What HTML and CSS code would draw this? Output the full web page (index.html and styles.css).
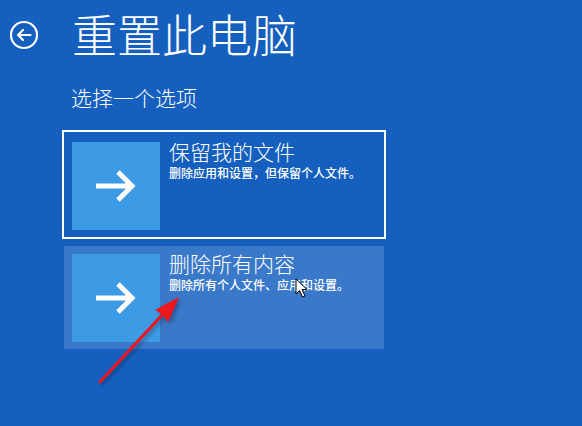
FILE: index.html
```html
<!DOCTYPE html>
<html lang="zh-CN">
  <head>
    <meta charset="UTF-8" />
    <meta name="viewport" content="width=device-width, initial-scale=1.0" />
    <title>重置此电脑</title>
    <link rel="stylesheet" href="styles.css">
  </head>
  <body>
    <div class="page">
      <div class="header">
        <button class="back-button" aria-label="返回">
          <svg width="30" height="30" viewBox="0 0 30 30">
            <circle cx="15" cy="15" r="13" fill="none" stroke="#fff" stroke-width="2.2" />
            <path d="M21.5 15H9 M14 10L9 15L14 20" fill="none" stroke="#fff" stroke-width="2.2" stroke-linecap="round" stroke-linejoin="round" />
          </svg>
        </button>
        <h1>重置此电脑</h1>
      </div>
      <div class="subtitle">选择一个选项</div>
      <div class="options">
        <div class="option selected">
          <div class="option-tile">
            <svg width="44" height="34" viewBox="0 0 44 34">
              <path d="M2 17H38 M24 3L38 17L24 31" fill="none" stroke="#fff" stroke-width="5" />
            </svg>
          </div>
          <div class="option-text">
            <div class="option-title">保留我的文件</div>
            <div class="option-description">删除应用和设置，但保留个人文件。</div>
          </div>
        </div>
        <div class="option hover">
          <div class="option-tile">
            <svg width="44" height="34" viewBox="0 0 44 34">
              <path d="M2 17H38 M24 3L38 17L24 31" fill="none" stroke="#fff" stroke-width="5" />
            </svg>
          </div>
          <div class="option-text">
            <div class="option-title">删除所有内容</div>
            <div class="option-description">删除所有个人文件、应用和设置。</div>
          </div>
        </div>
      </div>
    </div>
    <svg class="annotation" width="582" height="426" viewBox="0 0 582 426">
      <defs>
        <filter id="shadow" x="-20%" y="-20%" width="140%" height="140%">
          <feDropShadow dx="2" dy="2" stdDeviation="2" flood-color="#000" flood-opacity="0.35" />
        </filter>
      </defs>
      <g filter="url(#shadow)">
        <path d="M100 382L164 313" stroke="#f0121c" stroke-width="3" stroke-linecap="round" />
        <path d="M179 297L155 310L162 314L168 322Z" fill="#f0121c" />
      </g>
    </svg>
    <svg class="cursor" width="14" height="21" viewBox="0 0 14 21">
      <path d="M1 1V16L4.5 12.5L7.5 19L10 18L7 11.5H12Z" fill="#fff" stroke="#000" stroke-width="1" stroke-linejoin="round" />
    </svg>
  </body>
</html>
```

FILE: styles.css
```css
body {
  margin: 0;
  background-color: #1560be;
  font-family: "Noto Sans CJK SC", "Noto Sans", sans-serif;
  color: #ffffff;
  width: 582px;
  height: 426px;
  overflow: hidden;
  position: relative;
}
.page {
  padding: 7px 0 0 9px;
}
.header {
  display: flex;
  align-items: center;
}
.back-button {
  background: none;
  border: none;
  padding: 0;
  width: 30px;
  height: 30px;
  margin-top: 2px;
  display: flex;
  cursor: pointer;
}
h1 {
  margin: 0 0 0 33px;
  font-size: 45px;
  font-weight: 300;
  line-height: 54px;
  letter-spacing: 0;
}
.subtitle {
  margin: 22px 0 0 62px;
  font-size: 21px;
  font-weight: 300;
  line-height: 28px;
}
.options {
  margin: 19px 0 0 53px;
  display: flex;
  flex-direction: column;
  gap: 5px;
  width: 324px;
}
.option {
  display: flex;
  border: 2px solid transparent;
  background-clip: padding-box;
  padding: 10px 8px 7px 8px;
}
.option.selected {
  border-color: #ffffff;
}
.option.hover {
  background-color: #3a79c9;
  padding-top: 8px;
}
.option-tile {
  width: 88px;
  height: 88px;
  background-color: #3d9be5;
  display: flex;
  align-items: center;
  justify-content: center;
  flex-shrink: 0;
}
.option-text {
  margin: -3px 0 0 9px;
}
.option-title {
  font-size: 21px;
  font-weight: 300;
  line-height: 24px;
}
.option-description {
  margin-top: 2px;
  font-size: 12px;
  font-weight: 500;
  line-height: 16px;
}
.annotation {
  position: absolute;
  left: 0;
  top: 0;
  pointer-events: none;
}
.cursor {
  position: absolute;
  left: 295px;
  top: 278px;
}
```
